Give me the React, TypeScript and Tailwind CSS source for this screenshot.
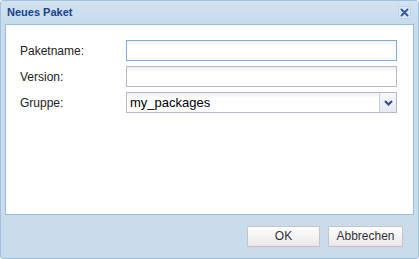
import React, { useState } from "react";

const font = { fontFamily: '"Liberation Sans", Arial, sans-serif' };

const App: React.FC = () => {
  const [name, setName] = useState("");
  const [version, setVersion] = useState("");

  return (
    <div
      className="w-[419px] h-[259px] bg-white overflow-hidden"
      style={font}
    >
      <div className="w-full h-full flex flex-col bg-[#c8dcec] border border-[#a3c0dc] rounded-[3px]">
        {/* Title bar */}
        <div className="h-[23px] flex items-center justify-between pl-[6px] pr-[7px] bg-gradient-to-b from-[#d3e3f1] to-[#c6dbec]">
          <span className="text-[11px] font-bold text-[#15428b] leading-none">
            Neues Paket
          </span>
          <button className="w-[13px] h-[13px] flex items-center justify-center bg-[#dbe8f4] border border-[#bcd2e6] rounded-[1px]">
            <svg width="9" height="9" viewBox="0 0 9 9">
              <path
                d="M1.5 1.5 L7.5 7.5 M7.5 1.5 L1.5 7.5"
                stroke="#2e5b99"
                strokeWidth="2"
                strokeLinecap="round"
              />
            </svg>
          </button>
        </div>

        {/* Body */}
        <div className="mx-[4px] h-[191px] bg-white border border-[#99bbe8] pt-[15px] pl-[14px] pr-[16px]">
          <div className="grid grid-cols-[106px_1fr] gap-y-[5px] items-center text-[12px] text-[#222]">
            <label>Paketname:</label>
            <input
              autoFocus
              value={name}
              onChange={(e) => setName(e.target.value)}
              className="h-[21px] w-full border border-[#7eadd9] px-[3px] outline-none bg-gradient-to-b from-[#eef4fa] to-white to-30%"
            />
            <label>Version:</label>
            <input
              value={version}
              onChange={(e) => setVersion(e.target.value)}
              className="h-[21px] w-full border border-[#b5b8c8] px-[3px] outline-none bg-gradient-to-b from-[#f0f0f3] to-white to-30%"
            />
            <label>Gruppe:</label>
            <div className="h-[21px] w-full flex border border-[#b5b8c8]">
              <div className="flex-1 flex items-center px-[3px] text-[13px] text-black bg-gradient-to-b from-[#f0f0f3] to-white to-30%">
                my_packages
              </div>
              <div className="w-[17px] flex items-center justify-center border-l border-[#c9cdd8] bg-gradient-to-b from-[#f7f8fb] to-[#e4e8f0]">
                <svg width="9" height="6" viewBox="0 0 9 6">
                  <path
                    d="M1 1 L4.5 4.5 L8 1"
                    stroke="#2a4f88"
                    strokeWidth="2"
                    fill="none"
                  />
                </svg>
              </div>
            </div>
          </div>
        </div>

        {/* Footer */}
        <div className="flex-1 flex items-center justify-end gap-[8px] pr-[15px] pb-[1px]">
          <button className="w-[73px] h-[21px] text-[12px] text-[#333] border border-[#c7c4c8] border-b-[#d9b7be] rounded-[2px] bg-gradient-to-b from-white to-[#e9e7ea]">
            OK
          </button>
          <button className="w-[75px] h-[21px] text-[12px] text-[#333] border border-[#c7c4c8] border-b-[#d9b7be] rounded-[2px] bg-gradient-to-b from-white to-[#e9e7ea]">
            Abbrechen
          </button>
        </div>
      </div>
    </div>
  );
};

export default App;
